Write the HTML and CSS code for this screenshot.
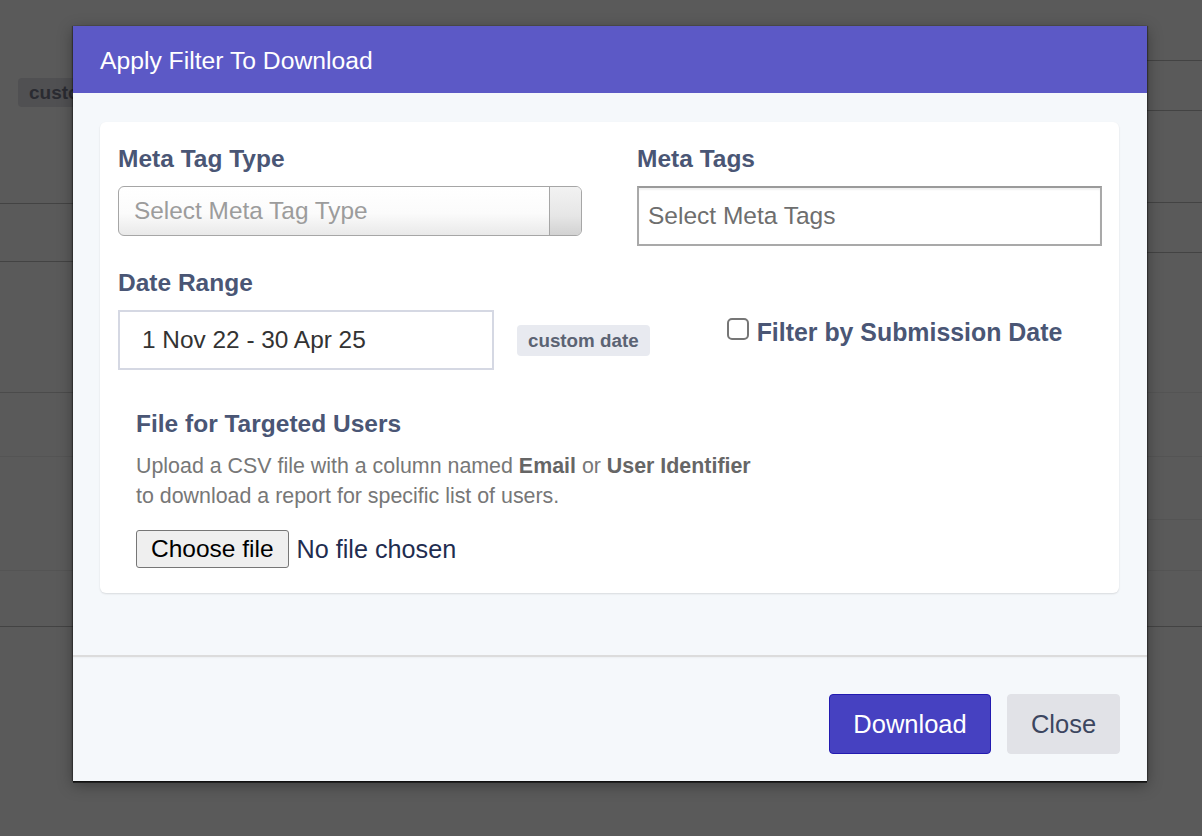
FILE: index.html
```html
<!DOCTYPE html>
<html lang="en">
<head>
<meta charset="utf-8">
<title>Apply Filter To Download</title>
<link rel="stylesheet" href="styles.css">
</head>
<body>
<div class="page">
  <div class="col col-left">
    <div class="row row-top"><span class="bg-badge">custom date</span></div>
    <div class="row h58 dark"></div>
    <div class="row h131 mid"></div>
    <div class="row h64 faint"></div>
    <div class="row h114 faint"></div>
    <div class="row h56 dark"></div>
  </div>
  <div class="col col-right">
    <div class="row h61 dark"></div>
    <div class="row h50 dark"></div>
    <div class="row h92 dark"></div>
    <div class="row h50 dark"></div>
    <div class="row h140 faint"></div>
    <div class="row h64 faint"></div>
    <div class="row h63 faint"></div>
    <div class="row h51 faint"></div>
    <div class="row h56 dark"></div>
  </div>
</div>

<div class="modal">
  <div class="modal-header">
    <h4 class="modal-title">Apply Filter To Download</h4>
  </div>
  <div class="modal-body">
    <div class="card">
      <div class="grid2">
        <div class="field">
          <div class="label">Meta Tag Type</div>
          <div class="select">
            <span class="select-text">Select Meta Tag Type</span>
            <span class="select-btn"></span>
          </div>
        </div>
        <div class="field">
          <div class="label">Meta Tags</div>
          <div class="tag-input">Select Meta Tags</div>
        </div>
      </div>

      <div class="label date-label">Date Range</div>
      <div class="date-row">
        <div class="date-input">1 Nov 22 - 30 Apr 25</div>
        <span class="badge">custom date</span>
        <label class="check">
          <span class="checkbox"></span>
          <span class="check-text">Filter by Submission Date</span>
        </label>
      </div>

      <div class="file-section">
        <div class="label">File for Targeted Users</div>
        <p class="help">Upload a CSV file with a column named <b>Email</b> or <b>User Identifier</b><br>to download a report for specific list of users.</p>
        <div class="file">
          <span class="file-btn">Choose file</span>
          <span class="file-name">No file chosen</span>
        </div>
      </div>
    </div>
  </div>
  <div class="modal-footer">
    <button class="btn btn-primary">Download</button>
    <button class="btn btn-light">Close</button>
  </div>
</div>
</body>
</html>
```

FILE: styles.css
```css
* { box-sizing: border-box; }

html, body {
  margin: 0;
  padding: 0;
}

body {
  width: 1202px;
  height: 836px;
  overflow: hidden;
  background: #5a5a5a;
  font-family: "Liberation Sans", Arial, Helvetica, sans-serif;
  position: relative;
}

/* dimmed background page */
.page {
  display: grid;
  grid-template-columns: 600px 602px;
  height: 836px;
}

.col {
  display: flex;
  flex-direction: column;
}

.row { flex: none; }
.row.dark { border-bottom: 1px solid #434343; }
.row.mid { border-bottom: 1px solid #4b4b4b; }
.row.faint { border-bottom: 1px solid #545454; }

.row-top {
  height: 204px;
  border-bottom: 1px solid #434343;
  padding: 78px 0 0 18px;
}

.h58 { height: 58px; }
.h131 { height: 131px; }
.h64 { height: 64px; }
.h114 { height: 114px; }
.h56 { height: 56px; }
.h61 { height: 61px; }
.h50 { height: 50px; }
.h92 { height: 92px; }
.h140 { height: 140px; }
.h63 { height: 63px; }
.h51 { height: 51px; }

.bg-badge {
  display: inline-block;
  height: 29px;
  line-height: 29px;
  padding: 0 11px;
  background: #505052;
  color: #2a2b31;
  border-radius: 4px;
  font-weight: bold;
  font-size: 19px;
}

/* modal */
.modal {
  position: absolute;
  left: 73px;
  top: 26px;
  width: 1074px;
  background: #f5f8fb;
  box-shadow: 0 1px 0 #111, 0 2px 0 #222, -1px 0 1px rgba(0,0,0,0.35), 1px 0 1px rgba(0,0,0,0.35), 0 4px 14px rgba(0,0,0,0.35);
}

.modal-header {
  height: 67px;
  background: #5c59c6;
  display: flex;
  align-items: center;
  padding: 2px 27px 0;
}

.modal-title {
  margin: 0;
  color: #ffffff;
  font-weight: normal;
  font-size: 24.7px;
  line-height: 30px;
}

.modal-body {
  padding: 29px 28px 62px 27px;
}

.card {
  background: #ffffff;
  border-radius: 6px;
  box-shadow: 0 1px 2px rgba(0,0,0,0.12);
  padding: 22px 17px 25px 18px;
}

.label {
  color: #4a5675;
  font-weight: bold;
  font-size: 24.5px;
  line-height: 30px;
  margin-bottom: 12px;
}

.grid2 {
  display: grid;
  grid-template-columns: 464px 465px;
  column-gap: 55px;
}

.select {
  margin-top: 1px;
  height: 50px;
  display: flex;
  border: 1px solid #a6a6a6;
  border-radius: 6px;
  background: linear-gradient(#ffffff 0%, #fbfbfb 55%, #e9e9e9 100%);
  overflow: hidden;
}

.select-text {
  flex: 1;
  padding-left: 15px;
  line-height: 48px;
  font-size: 24.4px;
  color: #9c9c9c;
}

.select-btn {
  width: 32px;
  border-left: 1px solid #a6a6a6;
  background: linear-gradient(#f2f2f2 0%, #e6e6e6 60%, #d2d2d2 100%);
}

.tag-input {
  height: 60px;
  border: 2px solid #a9a9a9;
  border-top-color: #9a9a9a;
  background: #ffffff;
  box-shadow: inset 0 2px 2px rgba(0,0,0,0.06);
  padding-left: 9px;
  line-height: 56px;
  font-size: 24.5px;
  color: #6e6e6e;
}

.date-label {
  margin-top: 22px;
}

.date-row {
  display: flex;
  align-items: center;
}

.date-input {
  width: 376px;
  height: 60px;
  border: 2px solid #d5d8e3;
  background: #ffffff;
  padding-left: 22px;
  line-height: 56px;
  font-size: 24.4px;
  color: #333333;
}

.badge {
  margin-left: 23px;
  height: 31px;
  line-height: 31px;
  padding: 0 11px;
  background: #e8eaf0;
  border-radius: 4px;
  color: #5b6373;
  font-weight: bold;
  font-size: 18.8px;
}

.check {
  align-self: flex-start;
  margin-top: 7px;
  margin-left: 77px;
  display: flex;
  align-items: flex-start;
}

.checkbox {
  width: 22px;
  height: 22px;
  margin-top: 1px;
  border: 2px solid #767676;
  border-radius: 5px;
  background: #ffffff;
}

.check-text {
  margin-left: 8px;
  color: #4a5675;
  font-weight: bold;
  font-size: 24.9px;
  line-height: 30px;
}

.file-section {
  padding-left: 18px;
  margin-top: 39px;
}

.help {
  margin: 0 0 19px 0;
  color: #777777;
  font-size: 21.4px;
  line-height: 30px;
}

.help b {
  color: #666666;
}

.file {
  display: flex;
  align-items: center;
}

.file-btn {
  height: 38px;
  line-height: 36px;
  padding: 0 14px;
  background: #efefef;
  border: 1px solid #767676;
  border-radius: 3px;
  color: #000000;
  font-size: 24.5px;
}

.file-name {
  margin-left: 8px;
  color: #1f2d50;
  font-size: 25.2px;
}

.modal-footer {
  border-top: 2px solid #dcdcdc;
  box-shadow: inset 0 1px 2px rgba(0,0,0,0.04);
  padding: 37px 27px 27px;
  display: flex;
  justify-content: flex-end;
  gap: 16px;
}

.btn {
  height: 60px;
  border-radius: 4px;
  font-family: "Liberation Sans", Arial, Helvetica, sans-serif;
  font-size: 25.5px;
  padding-top: 2px;
  cursor: pointer;
}

.btn-primary {
  width: 162px;
  background: #4641c1;
  border: 1px solid #231bb0;
  color: #ffffff;
}

.btn-light {
  width: 113px;
  background: #e1e2e7;
  border: 1px solid #e1e2e7;
  color: #3c465f;
}
```
